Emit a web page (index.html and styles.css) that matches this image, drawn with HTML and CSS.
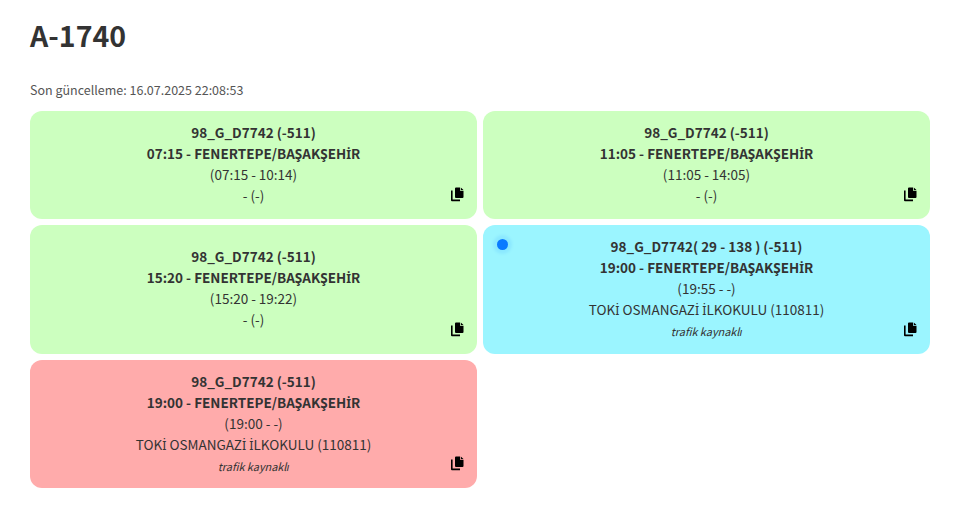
FILE: index.html
```html
<!DOCTYPE html>
<html lang="tr">
<head>
<meta charset="utf-8">
<title>A-1740</title>
<link rel="stylesheet" href="styles.css">
</head>
<body>
<main class="page">
  <h1 class="title">A-1740</h1>
  <p class="updated">Son güncelleme: 16.07.2025 22:08:53</p>
  <section class="grid">
    <article class="card green">
      <div class="strong">98_G_D7742 (-511)</div>
      <div class="strong">07:15 - FENERTEPE/BAŞAKŞEH<span class="dotted">İ</span>R</div>
      <div>(07:15 - 10:14)</div>
      <div>- (-)</div>
      <svg class="copy" viewBox="0 0 14 15"><use href="#copy"/></svg>
    </article>
    <article class="card green">
      <div class="strong">98_G_D7742 (-511)</div>
      <div class="strong">11:05 - FENERTEPE/BAŞAKŞEH<span class="dotted">İ</span>R</div>
      <div>(11:05 - 14:05)</div>
      <div>- (-)</div>
      <svg class="copy" viewBox="0 0 14 15"><use href="#copy"/></svg>
    </article>
    <article class="card green">
      <div class="strong">98_G_D7742 (-511)</div>
      <div class="strong">15:20 - FENERTEPE/BAŞAKŞEH<span class="dotted">İ</span>R</div>
      <div>(15:20 - 19:22)</div>
      <div>- (-)</div>
      <svg class="copy" viewBox="0 0 14 15"><use href="#copy"/></svg>
    </article>
    <article class="card blue">
      <span class="dot"></span>
      <div class="strong">98_G_D7742( 29 - 138 ) (-511)</div>
      <div class="strong">19:00 - FENERTEPE/BAŞAKŞEH<span class="dotted">İ</span>R</div>
      <div>(19:55 - -)</div>
      <div>TOK<span class="dotted">İ</span> OSMANGAZ<span class="dotted">İ</span> <span class="dotted">İ</span>LKOKULU (110811)</div>
      <div class="note">trafik kaynaklı</div>
      <svg class="copy" viewBox="0 0 14 15"><use href="#copy"/></svg>
    </article>
    <article class="card red">
      <div class="strong">98_G_D7742 (-511)</div>
      <div class="strong">19:00 - FENERTEPE/BAŞAKŞEH<span class="dotted">İ</span>R</div>
      <div>(19:00 - -)</div>
      <div>TOK<span class="dotted">İ</span> OSMANGAZ<span class="dotted">İ</span> <span class="dotted">İ</span>LKOKULU (110811)</div>
      <div class="note">trafik kaynaklı</div>
      <svg class="copy" viewBox="0 0 14 15"><use href="#copy"/></svg>
    </article>
  </section>
</main>
<svg class="defs" width="0" height="0" aria-hidden="true">
  <symbol id="copy" viewBox="0 0 14 15">
    <path d="M5 1.500Q5 .5 6 .5h4v3.200h3.500V10q0 1-1 1H6q-1 0-1-1zM10.800.5l2.700 2.400h-2.700z" fill="#000"/>
    <path d="M1 3.500h1.600v9.100H10v1.600H2q-1 0-1-1z" fill="#000"/>
  </symbol>
</svg>
</body>
</html>
```
FILE: styles.css
```css
* { box-sizing: border-box; }
html, body { margin: 0; padding: 0; background: #fff; }
body {
  font-family: "Noto Sans CJK SC", "Noto Sans CJK JP", "Noto Sans", sans-serif;
  color: #333;
  font-size: 13.500px;
  line-height: 21px;
}
.page { padding: 15px 47px 0 30px; }
.title {
  margin: 0;
  font-size: 28.500px;
  line-height: 40px;
  font-weight: 700;
}
.updated {
  margin: 24px 0 11px;
  font-size: 12.500px;
  line-height: 21px;
  color: #555;
}
.dotted { font-family: "Noto Sans", sans-serif; font-size: 0.92em; line-height: 0; }
.grid {
  display: grid;
  grid-template-columns: 447px 447px;
  gap: 6px;
}
.card {
  position: relative;
  display: flex;
  flex-direction: column;
  justify-content: center;
  padding: 11px 12px 13px;
  border-radius: 12px;
  text-align: center;
}
.green { background: #ccffbf; }
.blue { background: #9bf5ff; }
.red { background: #ffabab; }
.strong { font-weight: 700; }
.note {
  margin: 1px 0 -1px;
  font-size: 10.900px;
  font-style: italic;
  line-height: 20.500px;
}
.copy {
  position: absolute;
  right: 13px;
  bottom: 17px;
  width: 14px;
  height: 15px;
}
.dot {
  position: absolute;
  left: 14px;
  top: 14px;
  width: 11px;
  height: 11px;
  border-radius: 50%;
  background: #0a7bff;
  box-shadow: 0 0 3px 4px rgba(10, 123, 255, 0.1);
}
.defs { position: absolute; }
```
